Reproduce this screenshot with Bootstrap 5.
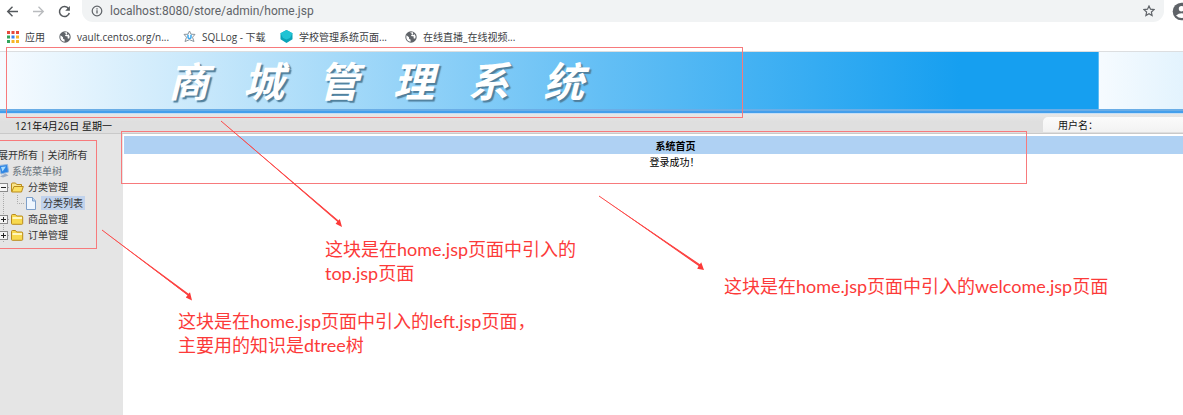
<!DOCTYPE html>
<html lang="zh-CN">
<head>
<meta charset="utf-8">
<meta name="viewport" content="width=device-width, initial-scale=1">
<title>商城管理系统</title>
<link href="https://cdn.jsdelivr.net/npm/bootstrap@5.3.0/dist/css/bootstrap.min.css" rel="stylesheet">
<style>
  body { font-family: "Open Sans", "Noto Sans CJK SC", sans-serif; font-size: 10px; line-height: 16px; color: #222; overflow: hidden; }
  a { color: inherit; text-decoration: none; }
  svg { display: block; flex: none; }
  .icon-btn { border: 0; padding: 0; background: none; }
  .toolbar-row { height: 22px; padding-left: 6px; }
  .nav-buttons { width: 76px; gap: 13px; }
  .address { background: #f1f3f4; border-radius: 0 0 11px 11px; padding: 0 9px; gap: 7px; }
  .address input { border: 0; outline: 0; background: none; padding: 0; font-family: Roboto, sans-serif; font-size: 12px; line-height: 20px; color: #5f6368; }
  .bookmarks { height: 30px; padding-left: 7px; border-bottom: 1px solid #dcdee0; color: #3c4043; }
  .bookmarks a { display: flex; align-items: center; gap: 6px; white-space: nowrap; }
  .banner { height: 57px; background: linear-gradient(90deg, #f6fbff 0, #c8e8fb 200px, #64bff5 600px, #169ff0 960px, #169ff0 1098px, #a8dbf8 1099px) 0 0 / 1099px 100% repeat-x; }
  .banner h1 { margin: 0; padding-left: 168px; gap: 34px; font-family: "Noto Sans CJK SC", sans-serif; font-size: 41px; line-height: 55px; font-weight: 700; font-style: italic; color: #fff; text-shadow: 2px 2px 1px #507f9c; }
  .rule { height: 5px; background: linear-gradient(#6aade6 50%, #449fec 50%); border-bottom: 1px solid #c5def5; }
  .status { height: 20px; background: linear-gradient(#e7e7e7, #dfdfdf 40%); border-bottom: 1px solid #c9c9c9; color: #111; padding-left: 15px; }
  .user-box { width: 140px; height: 15px; margin-top: 3px; padding-left: 15px; border-radius: 5px 0 0 0; background: linear-gradient(#fbfbfb, #f2f2f2); }
  .sidebar { width: 123px; background: #e5e5e5; padding-top: 13px; color: #333; }
  .sidebar nav { margin-left: -2px; }
  .sidebar .tree-row { display: flex; align-items: center; height: 16px; white-space: nowrap; }
  .toggle-all { gap: 2px; }
  .picked { background: #c0d2ec; padding: 0 2px; line-height: 14px; }
  .welcome { margin: 2px 0 0 1px; color: #000; }
  .welcome th { background: #afd1f3; height: 18px; padding: 2px 0 0 43px; font-weight: 700; }
  .welcome td { padding: 0 0 0 41px; height: 16px; }
  .welcome th, .welcome td { text-align: center; line-height: 16px; }
  .notes { position: absolute; inset: 0; pointer-events: none; }
  .frame, .note { position: absolute; }
  .frame { border: 1px solid #f77a7c; }
  .note { color: #fc3a39; font-family: Lato, "Noto Sans CJK SC", sans-serif; font-size: 18px; line-height: 24px; white-space: nowrap; margin: 0; }
  .arrows { position: absolute; left: 0; top: 0; fill: #fc3a39; }
</style>
<script src="https://cdn.jsdelivr.net/npm/bootstrap@5.3.0/dist/js/bootstrap.bundle.min.js"></script>
</head>
<body class="d-flex flex-column min-vh-100 position-relative">

<svg width="0" height="0" class="position-absolute">
  <symbol id="globe" viewBox="0 0 12 12"><circle cx="6" cy="6" r="5.7" fill="#5f6368"/><path d="M1.6 4.2 4 6.2 4.2 8l1.4.5v2.2C3 10.500 1.200 8.500 1.300 6zM5 1.400 8 1.300 8.200 3 6.500 3.800 6 5 8.800 5.600 8.500 7.300 10.100 7.800 10.700 5.800 9.800 3.300 8.600 3.900z" fill="#fff"/></symbol>
  <symbol id="folder" viewBox="0 0 14 14"><path d="M1.500 11.500V3.500q0-1 1-1h3l1.200 1.500h5q1 0 1 1v6.500q0 .8-.9.8H2.400q-.9 0-.9-.8z" fill="#f8d94e" stroke="#b98b1d"/><path d="M2.500 6h9.500" stroke="#fff6bd" stroke-width="2"/></symbol>
  <symbol id="plus" viewBox="0 0 12 16"><path d="M5.500 0v16M10 8.500h2" stroke="#aaa" stroke-dasharray="1 1"/><rect x="1.500" y="4.500" width="8" height="8" fill="#f4f4f4" stroke="#8a8a8a"/><path d="M3 8.500h5M5.500 6v5" stroke="#222"/></symbol>
  <symbol id="minus" viewBox="0 0 12 16"><path d="M5.500 12v4M10 8.500h2" stroke="#aaa" stroke-dasharray="1 1"/><rect x="1.500" y="4.500" width="8" height="8" fill="#f4f4f4" stroke="#8a8a8a"/><path d="M3 8.500h5" stroke="#222"/></symbol>
</svg>

<div class="toolbar-row d-flex bg-white">
  <div class="nav-buttons d-flex align-items-center">
    <button class="icon-btn" aria-label="后退"><svg width="13" height="13" viewBox="0 0 13 13" fill="none" stroke="#55595d" stroke-width="1.400"><path d="M12 6.500H2M6.500 1.700 1.700 6.500l4.800 4.800"/></svg></button>
    <button class="icon-btn" aria-label="前进"><svg width="13" height="13" viewBox="0 0 13 13" fill="none" stroke="#b9bbbe" stroke-width="1.300"><path d="M1 6.500h10M6.500 1.700l4.800 4.800-4.800 4.800"/></svg></button>
    <button class="icon-btn" aria-label="刷新"><svg width="13" height="13" viewBox="0 0 13 13"><path d="M10.600 3.700A5 5 0 1 0 11.300 8" fill="none" stroke="#55595d" stroke-width="1.500"/><path d="M11.900 1v4.700H7.200z" fill="#55595d"/></svg></button>
  </div>
  <div class="address d-flex align-items-center flex-grow-1">
    <svg width="12" height="12" viewBox="0 0 12 12"><circle cx="6" cy="6" r="4.800" fill="none" stroke="#5f6368" stroke-width="1.200"/><path d="M6 5.200v3.400M6 3.200v1.200" stroke="#5f6368" stroke-width="1.300"/></svg>
    <input class="flex-grow-1" type="text" aria-label="地址" value="localhost:8080/store/admin/home.jsp">
    <button class="icon-btn" aria-label="收藏"><svg width="12" height="12" viewBox="0 0 12 12"><path d="M6 1l1.500 3.200 3.500.4-2.600 2.400.7 3.600L6 8.800l-3.100 1.800.7-3.600L1 4.600l3.500-.4z" fill="none" stroke="#5f6368" stroke-width="1.200"/></svg></button>
  </div>
  <button class="icon-btn ms-2 overflow-hidden" aria-label="用户"><svg width="11" height="19" viewBox="0 0 11 19"><circle cx="9.500" cy="9.500" r="8.800" fill="#5f6368"/><circle cx="9.500" cy="6.700" r="2.700" fill="#fff"/><path d="M4 13.500q5.500-4.500 11 0-5.500 5-11 0z" fill="#fff"/></svg></button>
</div>

<nav class="bookmarks d-flex align-items-center bg-white" aria-label="书签">
  <a href="#" style="width:52px"><svg width="12" height="12" viewBox="0 0 12 12"><g fill="#e64a3c"><path d="M0 0h3v3H0zM4.500 0h3v3h-3zM9 0h3v3H9z"/></g><path d="M0 4.500h3v3H0zM0 9h3v3H0z" fill="#32a45a"/><path d="M4.500 4.500h3v3h-3z" fill="#3b82ee"/><path d="M9 4.500h3v3H9zM4.500 9h3v3h-3zM9 9h3v3H9z" fill="#f7b529"/></svg>应用</a>
  <a href="#" style="width:124px"><svg width="12" height="12"><use href="#globe"/></svg>vault.centos.org/n...</a>
  <a href="#" style="width:97px"><svg width="13" height="13" viewBox="0 0 13 13"><path d="M6.500 1l1.500 3.200 4 .2-2.500 2.800 1.500 4.300-4.500-1.800L2 11.500l1.500-4.300L1 4.400l4-.2z" fill="#fff" stroke="#8b959d"/><path d="M5 4.800v2.400q0 1.400 1.500 1.400T8 7.200V4.800" fill="none" stroke="#38a8ee" stroke-width="1.500"/></svg>SQLLog - 下载</a>
  <a href="#" style="width:125px"><svg width="13" height="13" viewBox="0 0 13 13"><path d="M6.500 0 12.500 3.300v6L6.500 13 .5 9.300v-6z" fill="#0aa3b8"/><path d="M6.500 0 12.500 3.300 10 8 6.500 9.600 3 8 .5 3.300z" fill="#20c3d4"/></svg>学校管理系统页面...</a>
  <a href="#"><svg width="12" height="12"><use href="#globe"/></svg>在线直播_在线视频...</a>
</nav>

<header>
  <div class="banner">
    <h1 class="d-flex"><span>商</span><span>城</span><span>管</span><span>理</span><span>系</span><span>统</span></h1>
  </div>
  <div class="rule"></div>
  <div class="status d-flex justify-content-between">
    <span class="pt-1">121年4月26日 星期一</span>
    <div class="user-box">用户名：</div>
  </div>
</header>

<div class="d-flex flex-grow-1">
  <aside class="sidebar flex-shrink-0">
    <nav aria-label="系统菜单">
      <div class="tree-row toggle-all"><a href="#">展开所有</a><span>|</span><a href="#">关闭所有</a></div>
      <div class="tree-row text-secondary"><svg width="14" height="14" viewBox="0 0 14 14"><path d="M1 1.500 9.500.500 10.500 8 3 10z" fill="#2f86e4" stroke="#90b5df"/><path d="M3 3l5-.6-3.500 5z" fill="#a9ddff"/><path d="M2 12.500 7.500 9.500 10.500 11.500 5 13.500z" fill="#9fb0c8"/></svg><a href="#">系统菜单树</a></div>
      <div class="tree-row"><svg width="12" height="16"><use href="#minus"/></svg><svg class="me-1" width="14" height="14" viewBox="0 0 14 14"><path d="M1.500 11.500V4q0-1 1-1h3L6.700 4.500h4.800v2" fill="#f9e58a" stroke="#b98b1d"/><path d="M1.700 12 4 6.500h9.300L11.500 12z" fill="#fbe061" stroke="#b98b1d"/></svg><a href="#">分类管理</a></div>
      <div class="tree-row"><svg width="27" height="16" viewBox="0 0 27 16"><path d="M5.500 0v16M19.500 0v8.500H27" fill="none" stroke="#aaa" stroke-dasharray="1 1"/></svg><svg class="me-1" width="12" height="13" viewBox="0 0 12 13"><path d="M1.500.5h6l3 3.500v8.500h-9z" fill="#eef6ff" stroke="#7d9fc9"/><path d="M7.500.5V4h3" fill="#b8d3f3" stroke="#7d9fc9"/></svg><a class="picked" href="#">分类列表</a></div>
      <div class="tree-row"><svg width="12" height="16"><use href="#plus"/></svg><svg class="me-1" width="14" height="14"><use href="#folder"/></svg><a href="#">商品管理</a></div>
      <div class="tree-row"><svg width="12" height="16"><use href="#plus"/></svg><svg class="me-1" width="14" height="14"><use href="#folder"/></svg><a href="#">订单管理</a></div>
    </nav>
  </aside>
  <main class="flex-grow-1 bg-white">
    <table class="welcome w-100">
      <thead><tr><th>系统首页</th></tr></thead>
      <tbody><tr><td>登录成功！</td></tr></tbody>
    </table>
  </main>
</div>

<div class="notes">
  <div class="frame" style="left:6px;top:47px;width:737px;height:71px"></div>
  <div class="frame" style="left:-2px;top:140px;width:99px;height:109px"></div>
  <div class="frame" style="left:121px;top:131px;width:906px;height:53px"></div>
  <svg class="arrows" width="710" height="305" viewBox="0 0 710 305">
    <path d="M221 121 337.300 221.800 335.600 223.700 342 227 339.800 218.900 338.500 220.400z"/>
    <path d="M102 230 187.500 295.300 185.800 297.500 192 300.500 190 292.300 188.600 293.800z"/>
    <path d="M599 196 698.600 266 697.200 268.700 704 270 701.200 262.300 699.900 264.300z"/>
    <path d="M221 121 338 221M102 230 188 295M599 196 699 265" stroke="#fc4a49" stroke-width="1"/>
  </svg>
  <p class="note" style="left:325px;top:237px">这块是在home.jsp页面中引入的<br>top.jsp页面</p>
  <p class="note" style="left:178px;top:309px">这块是在home.jsp页面中引入的left.jsp页面，<br>主要用的知识是dtree树</p>
  <p class="note" style="left:724px;top:274px">这块是在home.jsp页面中引入的welcome.jsp页面</p>
</div>
</body>
</html>
